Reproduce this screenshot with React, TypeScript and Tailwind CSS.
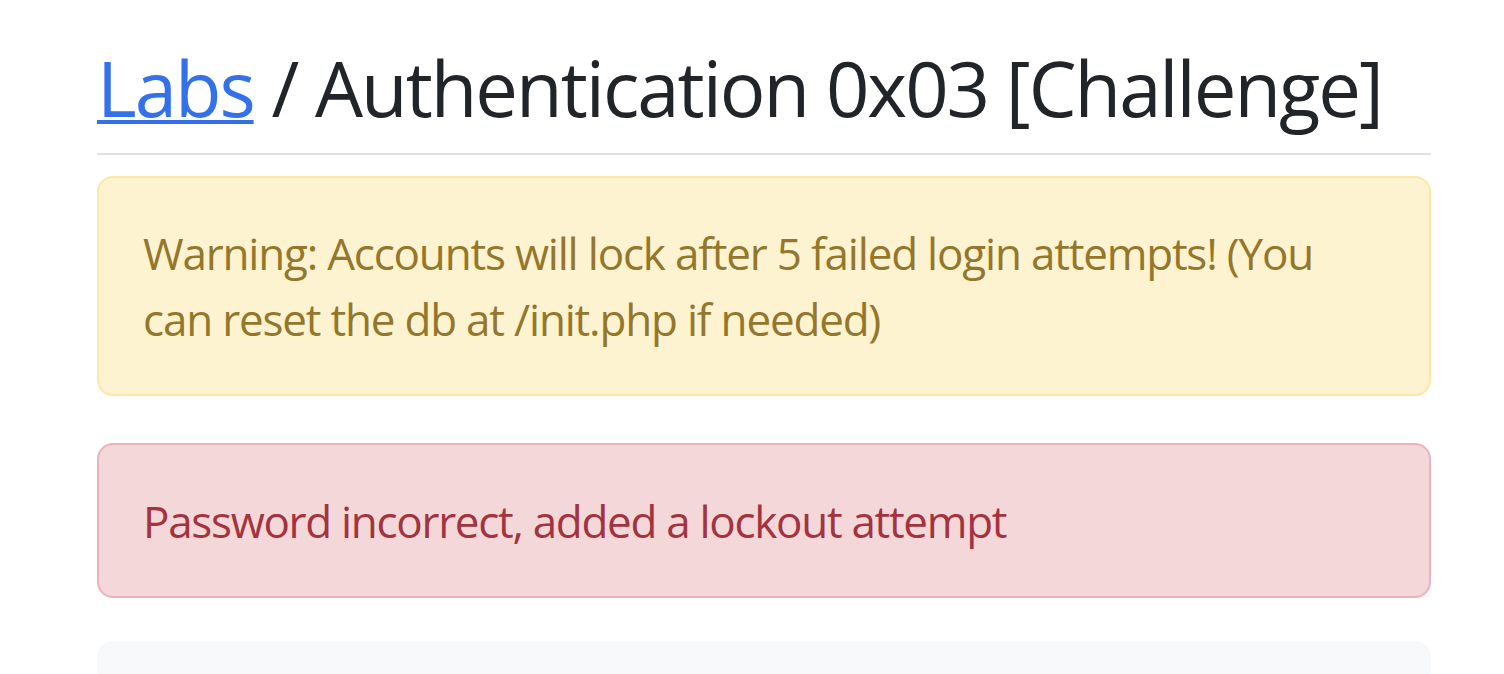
export default function App() {
  return (
    <div className="min-h-screen bg-white font-['Open_Sans',sans-serif] text-[#212529]">
      <div className="ml-[97px] w-[1334px] pt-[38px]">
        <h2 className="whitespace-nowrap text-[76px] leading-[100px] font-normal tracking-[-2px]">
          <a href="#" className="text-[#3470ea] underline decoration-[4px] underline-offset-[3px]">
            Labs
          </a>{" "}
          / Authentication 0x03 [Challenge]
        </h2>
        <hr className="mt-[15px] border-t-2 border-[#dee2e6]" />
        <div className="mt-[21px] rounded-[16px] border-2 border-[#fbe7a6] bg-[#fdf3d0] px-[44px] py-[42px] text-[44px] leading-[66px] tracking-[-1.2px] text-[#94772a]">
          <span className="whitespace-nowrap">Warning: Accounts will lock after 5 failed login attempts! (You</span>
          <br />
          can reset the db at /init.php if needed)
        </div>
        <div className="mt-[47px] rounded-[16px] border-2 border-[#eab3b8] bg-[#f3d7d9] px-[44px] pt-[43px] pb-[42px] text-[44px] leading-[66px] tracking-[-1.3px] text-[#a3333e]">
          Password incorrect, added a lockout attempt
        </div>
        <div className="mt-[43px] h-[200px] rounded-[16px] bg-[#f8f9fa]" />
      </div>
    </div>
  );
}
